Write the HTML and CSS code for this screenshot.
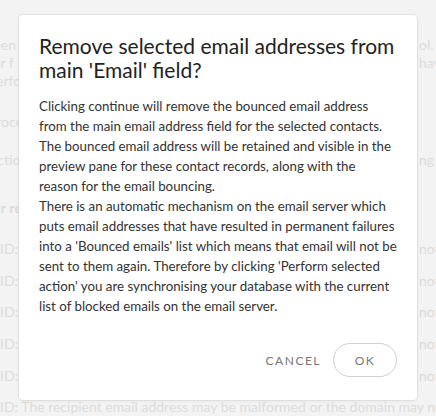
FILE: index.html
```html
<!DOCTYPE html>
<html lang="en">
<head>
<meta charset="utf-8">
<title>Remove selected email addresses</title>
<link rel="stylesheet" href="styles.css">
</head>
<body>
<div class="page">
  <div class="bg">
    <div class="bg-line l1"><span class="bl">then ha</span><span class="br">ol. If you</span></div>
    <div class="bg-line"><span class="bl">for f</span><span class="br">have</span></div>
    <div class="bg-line"><span class="bl">Perfo</span><span class="br"></span></div>
    <div class="bg-line l4"><span class="bl">Proce</span><span class="br"></span></div>
    <div class="bg-line l5"><span class="bl">Action</span><span class="br">ng</span></div>
    <div class="bg-line l6 bold"><span class="bl">for re</span><span class="br"></span></div>
    <div class="bg-line l7"><span class="bl">ID:</span><span class="br">not exist</span></div>
    <div class="bg-line row"><span class="bl">ID:</span><span class="br">not exist</span></div>
    <div class="bg-line row"><span class="bl">ID:</span><span class="br">not exist</span></div>
    <div class="bg-line row"><span class="bl">ID:</span><span class="br">not exist</span></div>
    <div class="bg-line row"><span class="bl">ID:</span><span class="br">not exist</span></div>
    <div class="bg-line row full">ID: The recipient email address may be malformed or the domain may not exist.</div>
  </div>

  <div class="modal" role="dialog" aria-labelledby="modal-title">
    <h1 id="modal-title" class="modal-title">Remove selected email addresses from main 'Email' field?</h1>
    <p class="modal-body">Clicking continue will remove the bounced email address<br>from the main email address field for the selected contacts. The bounced email address will be retained and visible in the preview pane for these contact records, along with the<br>reason for the email bouncing.<br>There is an automatic mechanism on the email server which puts email addresses that have resulted in permanent failures into a 'Bounced emails' list which means that email will not be sent to them again. Therefore by clicking 'Perform selected action' you are synchronising your database with the current list of blocked emails on the email server.</p>
    <div class="modal-footer">
      <button class="btn btn-cancel" type="button">Cancel</button>
      <button class="btn btn-ok" type="button">OK</button>
    </div>
  </div>
</div>
</body>
</html>
```
FILE: styles.css
```css
html, body {
  margin: 0;
  padding: 0;
}
body {
  width: 436px;
  height: 416px;
  overflow: hidden;
  background: #f3f3f3;
  font-family: "Lato", "Liberation Sans", sans-serif;
}
.page {
  position: relative;
  width: 436px;
  height: 416px;
  overflow: hidden;
}
.bg {
  padding-top: 36px;
  color: #dcdcdc;
  font-size: 14px;
  line-height: 18px;
}
.bg-line {
  display: grid;
  grid-template-columns: 419px 1fr;
  white-space: nowrap;
  overflow: hidden;
}
.bl {
  margin-left: -12px;
  overflow: hidden;
}
.br {
  overflow: hidden;
}
.l4 { margin-top: 23px; }
.l5 { margin-top: 20px; }
.l6 { margin-top: 30px; }
.l7 { margin-top: 23px; }
.row { margin-top: 13.7px; }
.bold { font-weight: 700; }
.l7 .bl, .row .bl { margin-left: 0; }
.full {
  display: block;
}

.modal {
  position: absolute;
  left: 19px;
  top: 15px;
  width: 398px;
  height: 385px;
  box-sizing: border-box;
  padding: 19px 20px 23px 20px;
  background: #fff;
  border-radius: 4px;
  box-shadow: 0 0 0 1px rgba(0, 0, 0, 0.05), 0 1px 4px rgba(0, 0, 0, 0.06);
  display: flex;
  flex-direction: column;
}
.modal-title {
  margin: 0 0 14px 0;
  font-size: 21px;
  line-height: 24px;
  font-weight: 400;
  color: #222;
}
.modal-body {
  margin: 0 -3px 0 0;
  font-size: 13.3px;
  line-height: 20px;
  color: #333;
}
.modal-footer {
  margin-top: auto;
  display: flex;
  justify-content: flex-end;
  align-items: center;
  gap: 12px;
}
.btn {
  font-family: inherit;
  font-size: 12px;
  letter-spacing: 1.5px;
  text-transform: uppercase;
  color: #777;
  background: none;
  height: 34px;
  padding: 0;
  cursor: pointer;
}
.btn-cancel {
  border: none;
}
.btn-ok {
  width: 64px;
  border: 1px solid #d0d0d0;
  border-radius: 17px;
}
```
